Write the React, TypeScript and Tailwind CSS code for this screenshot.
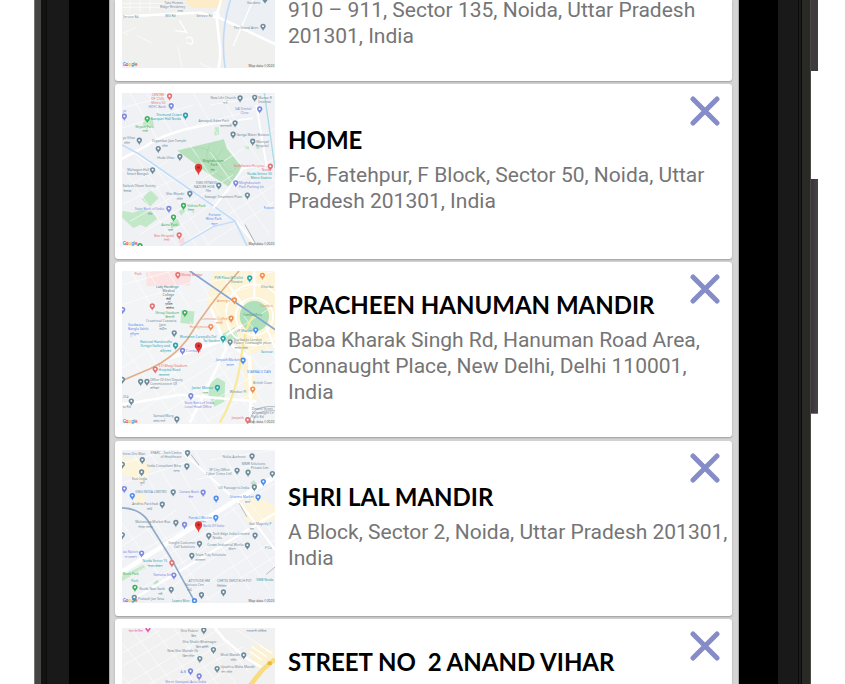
import React from "react";

const SLATE = "#6f8c9d";
const GREEN = "#3fae5d";
const BLUE = "#4f8df0";
const VIOLET = "#7d8ade";
const RED = "#e57373";
const TEAL = "#2aa3b0";
const ORANGE = "#f08f55";
const PINK = "#e05fae";

type Pin = [number, number, string];
type Label = [number, number, string, string];
type Shape = [string, string];
type Road = [string, string, number];

type MapData = {
  viewBox: string;
  base: string;
  areas: Shape[];
  roads: Road[];
  streets: string;
  pins: Pin[];
  labels: Label[];
  marker?: [number, number];
  logo?: [number, number];
};

const STREETS =
  "M36 70L180 30M36 130L250 60M60 24L140 160M110 24L190 150M170 24L240 140M250 24L330 160M330 24L390 130M300 60L496 30M260 120L450 70M36 250L200 480M80 220L260 484M130 240L300 484M36 320L200 210M36 360L260 250M60 410L320 260M90 450L370 270M160 460L400 290M230 470L496 300M290 480L496 350M240 180L420 450M300 200L480 450M350 180L496 380M400 160L496 290M340 230L496 130M380 290L496 220";

const homeMap: MapData = {
  viewBox: "36 24 460 460",
  base: "#eff1f4",
  streets: STREETS,
  areas: [
    ["M202 197L342 163L352 192L394 244L384 270L360 307L300 270Z", "#b7e1bd"],
    ["M120 314L146 340L120 366L95 344Z", "#c3e8c8"],
    ["M38 378L68 384L92 376L124 378L142 402L108 428L92 420L70 430L36 398Z", "#c3e8c8"],
    ["M98 120L104 98L128 100L132 120L112 128Z", "#c3e8c8"],
    ["M206 380L224 368L228 378L214 392Z", "#c3e8c8"],
    ["M180 414L204 402L212 422L184 430Z", "#c3e8c8"],
    ["M314 128L326 126L328 150L314 152Z", "#c3e8c8"],
    ["M400 188L418 178L418 194Z", "#c3e8c8"],
    ["M440 186L448 180L450 192L440 192Z", "#c3e8c8"],
    ["M206 466L222 458L224 474L210 478Z", "#fbd9d9"],
  ],
  roads: [
    ["M36 222L110 182Q170 140 300 118", "#fff", 8],
    ["M70 200L380 410L440 484", "#fff", 7],
    ["M36 180L84 206L375 408L412 484", "#c0dcfa", 5],
    ["M210 484L310 426L374 410", "#c0dcfa", 4],
    ["M464 24L496 250", "#a8dce6", 4],
    ["M440 60L470 240L400 250L350 320L310 370", "#fff", 6],
    ["M300 118L430 100", "#fff", 5],
    ["M248 190Q300 180 330 230T380 250M260 215Q300 260 340 190M300 180Q270 240 340 280", "#a3d4ab", 2],
    ["M406 420L440 482", "#8a9097", 2],
  ],
  pins: [
    [179, 34, RED], [184, 63, VIOLET], [112, 102, GREEN], [227, 92, TEAL], [391, 40, SLATE], [435, 38, SLATE],
    [450, 73, VIOLET], [376, 115, SLATE], [370, 149, SLATE], [429, 170, SLATE], [43, 95, VIOLET], [88, 167, SLATE],
    [145, 192, SLATE], [210, 216, SLATE], [128, 256, SLATE], [240, 327, SLATE], [327, 302, SLATE], [378, 295, VIOLET],
    [413, 332, SLATE], [482, 245, RED], [221, 363, GREEN], [177, 372, VIOLET], [191, 398, GREEN], [208, 452, RED],
    [90, 484, GREEN],
  ],
  labels: [
    [126, 34, "CENTRE", RED], [124, 46, "OF CIVIL", RED], [124, 58, "Metro 50", RED], [116, 70, "HDFC Bank", VIOLET],
    [140, 93, "Diamond Crown", TEAL], [122, 105, "Banquet Hall Noida", TEAL], [76, 128, "Shyam Park", GREEN], [98, 142, "पार्क", GREEN],
    [302, 43, "New Life Church", SLATE], [340, 57, "चर्च", SLATE], [446, 42, "Manav R", SLATE], [446, 54, "Internat", SLATE],
    [376, 76, "SAI Dental", VIOLET], [392, 88, "Clinic", VIOLET], [266, 112, "Amrapali Eden Park", SLATE], [330, 126, "अमरपाली", SLATE],
    [380, 153, "Ganga Water Botanic", SLATE], [440, 173, "Manipal", SLATE], [438, 185, "Hospital", SLATE],
    [38, 80, "ya", VIOLET], [38, 163, "ya Vihar", SLATE], [42, 177, "मंदिर", SLATE], [126, 172, "Digambar Jain Temple", SLATE],
    [156, 187, "मंदिर", SLATE], [142, 222, "Hoda Vihar", SLATE], [52, 258, "Mahagun Hall", SLATE], [50, 270, "Smart Bangali", SLATE],
    [278, 232, "Meghdootam", "#4c9a61"], [302, 244, "Park", "#4c9a61"], [302, 258, "मेघ", "#4c9a61"],
    [372, 246, "Sadbhavna Hospital", RED], [456, 258, "Noida", RED], [412, 271, "Noida Sector 50", TEAL], [422, 283, "Metro Station", TEAL],
    [258, 297, "DMK FITNESS", SLATE], [252, 309, "NATURE HUB", SLATE], [288, 323, "जिम", SLATE], [388, 298, "Meghdootam", VIOLET],
    [388, 310, "Park Parking lot", VIOLET], [38, 308, "Kailash Dham Society", SLATE], [40, 322, "कैलाश", SLATE],
    [168, 331, "Shiv Mandir", SLATE], [200, 345, "मंदिर", SLATE], [284, 340, "Sewage Treatment Plant", SLATE],
    [232, 366, "Vishnu Park", GREEN], [234, 380, "विष्णु", GREEN], [74, 376, "State Bank of India", VIOLET], [114, 390, "बैंक", VIOLET],
    [154, 424, "Aaina Park", GREEN], [174, 438, "पार्क", GREEN], [132, 456, "Neo Hospital", RED], [162, 470, "नियो", RED],
    [296, 394, "Fortune", BLUE], [288, 406, "Wine Park", BLUE], [304, 420, "वाइन", BLUE], [462, 374, "Future", BLUE],
    [416, 480, "Map data ©2020", "#555"],
  ],
  marker: [266, 250],
  logo: [38, 480],
};

const hanumanMap: MapData = {
  viewBox: "36 28 460 460",
  base: "#f3f4f6",
  streets: STREETS,
  areas: [
    ["M310 28H496V250L420 280L380 250L330 200L290 130Z", "#fdf3d7"],
    ["M400 300L430 290L444 420L404 412Z", "#fdf3d7"],
    ["M108 30L244 28L240 72L170 70L110 74Z", "#fbe3e3"],
    ["M390 165A44 46 0 1 1 478 163A44 46 0 1 1 390 165Z", "#aee0bb"],
    ["M214 146L254 150L250 188L212 184Z", "#bfe8c7"],
    ["M334 220L376 196L384 226L338 250Z", "#bfe8c7"],
    ["M300 368L322 348L346 362L344 420L314 436L296 400Z", "#bfe8c7"],
  ],
  roads: [
    ["M36 430L210 400L440 420", "#fff", 8],
    ["M180 290L330 240", "#fff", 10],
    ["M300 130L350 260L240 484", "#fff", 8],
    ["M350 240L420 290L424 484", "#fff", 10],
    ["M330 484Q380 400 394 290T434 163", "#f7ea9c", 7],
    ["M434 28V110M434 210V240M350 60L400 130M470 196L496 260M350 220L398 190", "#fff", 6],
    ["M378 165A56 56 0 1 1 490 165A56 56 0 1 1 378 165M350 165A84 84 0 0 1 496 96M352 180A86 86 0 0 0 496 228", "#fff", 5],
    ["M36 358L120 322Q190 290 232 234Q300 124 388 28", "#e3ae8b", 5],
    ["M240 28L496 204", "#85a5d2", 5],
    ["M420 484Q424 430 496 436M430 484Q430 444 496 448", "#9a9ea5", 2],
  ],
  pins: [
    [204, 40, RED], [458, 42, ORANGE], [420, 50, TEAL], [374, 116, ORANGE], [127, 134, RED], [225, 154, GREEN],
    [364, 171, ORANGE], [303, 196, ORANGE], [193, 215, SLATE], [197, 252, TEAL], [340, 232, TEAL], [361, 242, SLATE],
    [438, 206, BLUE], [218, 268, VIOLET], [400, 297, BLUE], [136, 324, RED], [92, 361, SLATE], [111, 361, SLATE],
    [323, 379, TEAL], [429, 384, ORANGE], [64, 420, SLATE], [243, 404, VIOLET], [201, 474, SLATE], [414, 476, RED],
    [38, 145, VIOLET], [37, 355, SLATE],
  ],
  labels: [
    [74, 39, "Park", RED], [214, 44, "Shivaji Bridge", RED], [138, 78, "Lady Hardinge", "#37798a"], [158, 90, "Medical", "#37798a"],
    [158, 102, "College", "#37798a"], [168, 116, "लेडी", "#333"], [166, 129, "हार्डिंग", "#333"], [168, 142, "कॉलेज", "#333"],
    [314, 52, "PVR Plaza (E Delhi)", TEAL], [362, 64, "Theatre", TEAL], [454, 80, "Dhariba", SLATE], [322, 122, "Amergic", ORANGE],
    [452, 137, "Combos", ORANGE], [136, 156, "Shivaji Stadium", GREEN], [166, 168, "शिवाजी", GREEN], [108, 181, "Cruzeiroul Cravania", SLATE],
    [148, 193, "Jane", SLATE], [148, 206, "केंद्रीय", SLATE], [54, 194, "Gurdwara", BLUE], [54, 206, "Bangla Sahib", BLUE],
    [60, 220, "गुरुद्वारा", BLUE], [274, 174, "Connexus Coffee", ORANGE], [318, 187, "कॉफी", ORANGE], [240, 200, "Honeymoon", ORANGE],
    [210, 229, "Westerne Carepullo Del", TEAL], [280, 241, "Tai Garden", TEAL], [90, 246, "National Handicrafts", TEAL],
    [92, 258, "Design Gallery and", TEAL], [150, 272, "संग्रहालय", TEAL], [228, 273, "Combank", VIOLET], [380, 211, "LP Marker", BLUE],
    [372, 237, "Starbucks London", SLATE], [372, 249, "Palace Connaught place", SLATE], [374, 262, "कनॉट प्लेस", SLATE],
    [318, 300, "Janpath Market", BLUE], [350, 313, "बाज़ार", BLUE], [146, 318, "S D Bhagi Stadium", RED], [146, 330, "Hospital Road", TEAL],
    [146, 343, "अस्पताल", TEAL], [120, 358, "Office Of Shri Deputy", SLATE], [120, 370, "Commissioner Of", SLATE], [120, 384, "कमिश्नर", SLATE],
    [246, 383, "Jantar Mantar", TEAL], [278, 397, "जंतर", GREEN], [412, 334, "STARBACK DAN", BLUE], [430, 368, "British Coun", SLATE],
    [224, 428, "State Bank of India", VIOLET], [224, 440, "Local Head Office", VIOLET], [38, 410, "254", SLATE], [38, 440, "ta Rd", SLATE],
    [130, 468, "Sansad Marg", SLATE], [130, 482, "संसद मार्ग", SLATE], [366, 474, "Janpath", RED], [426, 446, "Dennis Street", SLATE],
    [426, 458, "Connaught Ln", SLATE], [426, 470, "Park Rd", SLATE], [454, 276, "Sarovar", TEAL], [360, 396, "Windsor Pl", SLATE],
    [400, 162, "Central Park", "#4c9a61"], [416, 484, "Map data ©2020", "#555"],
  ],
  marker: [266, 255],
  logo: [38, 484],
};

const lalMap: MapData = {
  viewBox: "36 30 460 460",
  base: "#f0f2f5",
  streets: STREETS,
  areas: [
    ["M36 54L80 52L130 78L100 130L60 110L36 104Z", "#fdf4dc"],
    ["M392 188L440 166L496 200V240L440 252L410 246Z", "#fdf4dc"],
    ["M70 170L98 160L110 184L84 200Z", "#fdf4dc"],
    ["M422 130L432 120L442 132L432 142Z", "#bfe5c4"],
    ["M130 430L142 420L150 430L138 440Z", "#bfe5c4"],
    ["M36 408L100 376L110 384L36 424Z", "#c9e9cd"],
  ],
  roads: [
    ["M36 396L380 180L496 110", "#fff", 14],
    ["M60 484L300 340L496 220", "#fff", 7],
    ["M210 30L400 200L496 330", "#fff", 6],
    ["M36 204Q100 206 124 260L180 350L256 488", "#91a9c4", 5],
    ["M244 44L268 76M470 404L496 382M388 190L412 232", "#9ca2a8", 2],
  ],
  pins: [
    [233, 39, SLATE], [97, 60, SLATE], [231, 79, SLATE], [37, 74, SLATE], [95, 97, SLATE], [427, 49, SLATE],
    [382, 92, SLATE], [415, 98, SLATE], [488, 102, SLATE], [461, 126, BLUE], [434, 142, SLATE], [43, 147, VIOLET],
    [67, 168, BLUE], [190, 157, SLATE], [280, 158, VIOLET], [319, 176, BLUE], [445, 172, BLUE], [157, 194, SLATE],
    [198, 249, SLATE], [224, 255, VIOLET], [318, 234, BLUE], [297, 288, SLATE], [436, 287, SLATE], [269, 312, SLATE],
    [413, 317, SLATE], [246, 348, SLATE], [37, 286, SLATE], [95, 341, VIOLET], [186, 370, RED], [192, 407, VIOLET],
    [75, 444, GREEN], [184, 450, SLATE], [73, 474, SLATE], [275, 466, SLATE], [341, 458, SLATE], [254, 484, BLUE],
  ],
  labels: [
    [38, 44, "lness Dev Man", SLATE], [122, 41, "SPARC - Tech Centre", SLATE], [152, 53, "of Healthcare", SLATE], [112, 82, "India Consultant Biha", SLATE],
    [190, 96, "भारत", SLATE], [66, 120, "East India", SLATE], [90, 133, "पूर्वी", SLATE], [338, 54, "Nokia Authoriz", SLATE],
    [396, 75, "MMR Solutions", SLATE], [424, 87, "Private Lim", SLATE], [298, 94, "SP City Office", SLATE], [288, 106, "Cyber Crime Cell", SLATE],
    [76, 160, "GNG INDIA LIMITED", SLATE], [208, 160, "Canara Bank", VIOLET], [236, 174, "बैंक", VIOLET], [326, 148, "U3 Passage to India", SLATE],
    [360, 174, "Sharma Market", BLUE], [406, 188, "शर्मा", BLUE], [66, 196, "Andhra Parichad", SLATE], [110, 210, "आंध्र", SLATE],
    [76, 248, "Mahanaya Market Roa", SLATE], [84, 264, "नॉएडा मार्केट", SLATE], [236, 236, "Panda I Bholen", BLUE], [266, 248, "भोलेन", BLUE],
    [280, 262, "Bank Of India", VIOLET], [308, 286, "Tech Edge India Limited", SLATE], [308, 298, "Noida", SLATE],
    [418, 257, "Gail Majurity P", SLATE], [420, 271, "गेल", SLATE], [176, 314, "Insight Customer", SLATE], [192, 326, "Call Solutions", SLATE],
    [292, 318, "Crown Industrial Works", SLATE], [356, 332, "क्राउन", SLATE], [256, 350, "Team Tidy Solutions", SLATE], [256, 364, "समाधान", SLATE],
    [38, 340, "ias Nation", VIOLET], [44, 354, "ता संस्थान", VIOLET], [98, 368, "Noida Sector 15", TEAL], [112, 382, "नॉएडा सेक्टर", TEAL],
    [466, 328, "F Ca", SLATE], [38, 406, "Block Park", GREEN], [64, 426, "Park", GREEN], [130, 410, "Yamuna Int", VIOLET],
    [88, 452, "Noida Navi Sank", SLATE], [144, 466, "नवी", SLATE], [84, 480, "Prakash Jan Seva", SLATE], [236, 428, "ATTITUDE HM", SLATE],
    [226, 440, "Various Cen", SLATE], [232, 454, "केंद्र", SLATE], [322, 428, "CERTIS INFOTECH PVT", SLATE], [322, 442, "लिमिटेड", SLATE],
    [186, 486, "Lawns Mon", TEAL], [440, 423, "SMB Noida", TEAL], [416, 486, "Map data ©2020", "#555"],
  ],
  marker: [266, 257],
  logo: [38, 486],
};

const officeMap: MapData = {
  viewBox: "36 0 460 204",
  base: "#f0f0ef",
  streets: "M36 10H200M36 22H210M60 0V36M90 0V36M120 0V36M36 100L80 82M44 98L56 106M80 106L126 130M204 140L216 200M270 190L300 204",
  areas: [
    ["M230 0H342L326 24L250 22L228 10Z", "#fcecc8"],
    ["M346 0H496V132L410 98L340 58Z", "#eceff3"],
  ],
  roads: [
    ["M36 50L180 42L270 38L330 54L496 132", "#fff", 8],
    ["M334 0L320 46L328 120Q336 160 326 204", "#fff", 8],
    ["M362 0Q330 100 346 204", "#bfdbf8", 5],
    ["M430 0L400 70L370 138", "#fff", 4],
    ["M208 60L232 100M196 92L228 96M228 116Q246 104 248 122T230 126", "#fff", 4],
    ["M310 46A9 9 0 1 1 328 46A9 9 0 1 1 310 46", "#fff", 5],
  ],
  pins: [[460, 80, SLATE], [466, -2, SLATE]],
  labels: [
    [164, 11, "Tata Homes", SLATE], [150, 23, "Ridge Residency", SLATE], [204, 36, "टाटा", SLATE], [38, 53, "Service Rd", SLATE],
    [166, 50, "MG Rd", SLATE], [260, 50, "Service Rd", SLATE], [372, 86, "The Grand Aren", SLATE], [412, 12, "Gardens", SLATE],
    [416, 200, "Map data ©2020", "#555"],
  ],
  logo: [38, 199],
};

const anandMap: MapData = {
  viewBox: "36 54 460 460",
  base: "#f1f1f1",
  streets: "M36 130L150 60M36 170L230 54M50 222L320 62M120 222L360 90M180 222L400 110M260 240L430 130M60 54L190 222M130 54L270 240M190 54L330 230M250 60L380 222M310 54L420 190M380 60L490 130M36 100L150 240M36 200L80 240",
  areas: [["M414 120L440 104L490 120L496 150L440 172Z", "#fbf2d3"]],
  roads: [
    ["M316 54L346 90L412 146L470 180", "#fff", 7],
    ["M496 148L460 178L410 240", "#f8dc80", 14],
    ["M426 110L470 140M420 124L456 150M450 106L486 130", "#fff", 4],
    ["M474 160H486", "#e5b93a", 10],
  ],
  pins: [
    [114, 56, PINK], [282, 61, SLATE], [311, 120, SLATE], [270, 147, SLATE], [402, 136, SLATE], [242, 184, VIOLET], [268, 199, VIOLET], [322, 177, SLATE],
  ],
  labels: [
    [56, 66, "दिल के लिए", PINK], [212, 66, "Shiv Palace", SLATE], [244, 80, "शिव", SLATE], [218, 100, "Shiv Shakti Bhatnagar", SLATE],
    [258, 113, "शिव शक्ति", SLATE], [172, 127, "New Shiv Mandir (Sr", SLATE], [218, 141, "शिव मंदिर", SLATE], [332, 138, "Modi Mandir", SLATE],
    [362, 152, "मंदिर", SLATE], [332, 174, "Upashra Maha Mandir", SLATE], [334, 188, "जैन मंदिर", SLATE], [212, 189, "A-B", VIOLET],
    [166, 219, "Shree Ganapati Auto India", VIOLET], [410, 66, "राजधानी पब्लिक", SLATE],
  ],
};

function MapThumb({ data, className }: { data: MapData; className: string }) {
  return (
    <svg viewBox={data.viewBox} className={`w-[153px] shrink-0 ${className}`} fontFamily="'Noto Sans', 'Liberation Sans', sans-serif">
      <rect x="0" y="-20" width="540" height="560" fill={data.base} />
      {data.areas.map(([d, fill]) => (
        <path key={d} d={d} fill={fill} />
      ))}
      <path d={data.streets} stroke="#fff" strokeOpacity="0.75" strokeWidth="2.5" fill="none" />
      {data.roads.map(([d, stroke, w]) => (
        <path key={d} d={d} stroke={stroke} strokeWidth={w} fill="none" strokeLinejoin="round" />
      ))}
      {data.labels.map(([x, y, text, fill]) => (
        <text key={`${x}-${y}`} x={x} y={y} fill={fill} fontSize="10">
          {text}
        </text>
      ))}
      {data.pins.map(([x, y, fill]) => (
        <g key={`${x}-${y}`} transform={`translate(${x} ${y})`}>
          <path d="M0 13C-2 7-8 5-8-1A8 8 0 1 1 8-1C8 5 2 7 0 13Z" fill={fill} />
          <circle cy="-1" r="3" fill="#fff" />
        </g>
      ))}
      {data.marker && (
        <g transform={`translate(${data.marker[0]} ${data.marker[1]})`}>
          <path d="M0 22C-2 10-11 8-11-2A11 11 0 1 1 11-2C11 8 2 10 0 22Z" fill="#e53935" />
          <circle cy="-2" r="4" fill="#9f2420" />
        </g>
      )}
      {data.logo && (
        <text x={data.logo[0]} y={data.logo[1]} fontSize="13" fontWeight="600">
          <tspan fill="#4285f4">G</tspan>
          <tspan fill="#ea4335">o</tspan>
          <tspan fill="#fbbc05">o</tspan>
          <tspan fill="#4285f4">g</tspan>
          <tspan fill="#34a853">l</tspan>
          <tspan fill="#ea4335">e</tspan>
        </text>
      )}
    </svg>
  );
}

function Title({ children }: { children: React.ReactNode }) {
  return (
    <h2 className="mb-1.5 whitespace-pre font-['Lato','Liberation_Sans',sans-serif] text-2xl/8 font-bold text-black">
      {children}
    </h2>
  );
}

function Address({ lines }: { lines: string[] }) {
  return (
    <p className="whitespace-nowrap text-[21px]/[26px] text-[#757575]">
      {lines.map((line) => (
        <span key={line} className="block">
          {line}
        </span>
      ))}
    </p>
  );
}

function RemoveButton({ name }: { name: string }) {
  return (
    <button type="button" aria-label={`Remove ${name}`} className="absolute top-3 right-3 size-[30px]">
      <svg viewBox="0 0 30 30" className="size-full" stroke="#858cc8" strokeWidth="5" strokeLinecap="round">
        <path d="M3 3L27 27M27 3L3 27" />
      </svg>
    </button>
  );
}

const CARD = "relative flex gap-[13px] rounded-[3px] bg-white px-[7px] shadow-[0_1px_2px_#9b9b9b]";

const places = [
  { name: "HOME", map: homeMap, lines: ["F-6, Fatehpur, F Block, Sector 50, Noida, Uttar", "Pradesh 201301, India"] },
  {
    name: "PRACHEEN HANUMAN MANDIR",
    map: hanumanMap,
    lines: ["Baba Kharak Singh Rd, Hanuman Road Area,", "Connaught Place, New Delhi, Delhi 110001,", "India"],
  },
  { name: "SHRI LAL MANDIR", map: lalMap, lines: ["A Block, Sector 2, Noida, Uttar Pradesh 201301,", "India"] },
];

export default function App() {
  return (
    <div className="flex h-screen overflow-hidden bg-white pr-[27px] pl-[34px] font-['Roboto','Liberation_Sans',sans-serif]">
      <div className="w-[7px] shrink-0 border-l border-[#777] bg-[#444542]" />
      <div className="w-[6px] shrink-0 border-r border-[#0c0c0c] bg-[#131412]" />
      <div className="w-[22px] shrink-0 bg-[#191919]" />
      <div className="w-10 shrink-0 bg-black" />
      <main className="flex min-w-0 flex-1 flex-col overflow-hidden border-x border-[#aaa] bg-[#d5d5d5] pr-[6px] pl-[5px]">
        <article className={`${CARD} mb-[3px] h-[81px] shrink-0 items-end rounded-t-none pb-[13px]`}>
          <MapThumb data={officeMap} className="h-[68px]" />
          <div className="-mt-[3px] self-start">
            <Address lines={["910 – 911, Sector 135, Noida, Uttar Pradesh", "201301, India"]} />
          </div>
        </article>
        {places.map((place) => (
          <article key={place.name} className={`${CARD} mb-[3px] h-[175px] shrink-0 items-center odd:mb-1`}>
            <MapThumb data={place.map} className="mt-[9px] h-[153px] self-start" />
            <div className="pb-1.5">
              <Title>{place.name}</Title>
              <Address lines={place.lines} />
            </div>
            <RemoveButton name={place.name} />
          </article>
        ))}
        <article className={`${CARD} min-h-0 flex-1 overflow-hidden rounded-b-none pt-[9px]`}>
          <MapThumb data={anandMap} className="h-[153px]" />
          <div className="pt-[18px]">
            <Title>{"STREET NO  2 ANAND VIHAR"}</Title>
          </div>
          <RemoveButton name="STREET NO 2 ANAND VIHAR" />
        </article>
      </main>
      <div className="w-[39px] shrink-0 bg-black" />
      <div className="w-[20px] shrink-0 bg-[#191919]" />
      <div className="w-[4px] shrink-0 border-x border-[#0b0b0b] bg-[#1b1b1b]" />
      <div className="w-[9px] shrink-0 border-r border-[#4a4a46] bg-[#292a25]" />
      <div className="flex w-[7px] shrink-0 flex-col">
        <div className="h-[71px] bg-[#403b3f]" />
        <div className="mt-[108px] h-[235px] border-b border-[#777] bg-linear-to-r from-[#39353a] to-[#494349]" />
      </div>
    </div>
  );
}
